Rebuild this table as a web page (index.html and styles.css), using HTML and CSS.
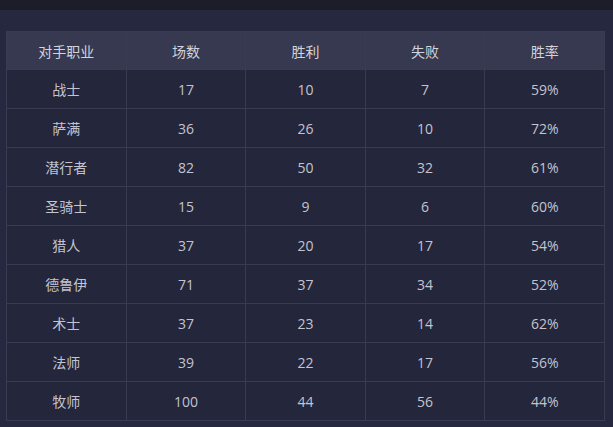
FILE: index.html
```html
<!DOCTYPE html>
<html>

<head>
    <meta charset="utf-8">
    <title>对手职业统计</title>
    <link rel="stylesheet" href="styles.css">
</head>

<body>
    <div class="topbar"></div>
    <div class="panel">
        <table class="stats">
            <thead>
                <tr>
                    <th>对手职业</th>
                    <th>场数</th>
                    <th>胜利</th>
                    <th>失败</th>
                    <th>胜率</th>
                </tr>
            </thead>
            <tbody>
                <tr><td>战士</td><td>17</td><td>10</td><td>7</td><td>59%</td></tr>
                <tr><td>萨满</td><td>36</td><td>26</td><td>10</td><td>72%</td></tr>
                <tr><td>潜行者</td><td>82</td><td>50</td><td>32</td><td>61%</td></tr>
                <tr><td>圣骑士</td><td>15</td><td>9</td><td>6</td><td>60%</td></tr>
                <tr><td>猎人</td><td>37</td><td>20</td><td>17</td><td>54%</td></tr>
                <tr><td>德鲁伊</td><td>71</td><td>37</td><td>34</td><td>52%</td></tr>
                <tr><td>术士</td><td>37</td><td>23</td><td>14</td><td>62%</td></tr>
                <tr><td>法师</td><td>39</td><td>22</td><td>17</td><td>56%</td></tr>
                <tr><td>牧师</td><td>100</td><td>44</td><td>56</td><td>44%</td></tr>
            </tbody>
        </table>
    </div>
</body>

</html>
```

FILE: styles.css
```css
*{
    padding: 0;
    margin: 0;
}
html,body{
    width: 100%;
    height: 100%;
}
body{
    background-color: #262840;
    font-family: "Segoe UI", "Open Sans", "Noto Sans CJK SC", sans-serif;
    color: #c3c4cf;
    overflow: hidden;
}
.topbar{
    height: 10px;
    background-color: #1c1d28;
}
.panel{
    padding: 21px 8px 0 6px;
}
.stats{
    width: 599px;
    border-collapse: collapse;
    table-layout: fixed;
    font-size: 14px;
    text-align: center;
}
.stats th,
.stats td{
    border: 1px solid #393b53;
    font-weight: 400;
}
.stats th{
    height: 37px;
    background-color: #373950;
    color: #d2d3dc;
}
.stats td{
    height: 38px;
    background-color: #24263b;
}
```
